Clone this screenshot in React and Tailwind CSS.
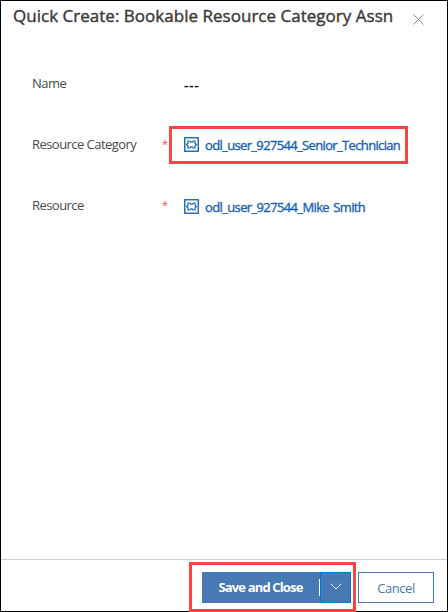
import React from "react";

function PuzzleIcon({ className }) {
  return (
    <svg width="15" height="15" viewBox="0 0 15 15" fill="none" stroke="#1d66b8" className={`shrink-0 ${className}`}>
      <rect x="0.75" y="0.75" width="13.5" height="13.5" strokeWidth="1.4" />
      <path
        d="M4 4H5.800L6.600 5.200H8.400L9.200 4H11V6.200L12.500 7.500L11 8.800V11H9.200L8.400 9.800H6.600L5.800 11H4V8.800L2.500 7.500L4 6.200Z"
        strokeWidth="1.2"
      />
    </svg>
  );
}

function Field({ label, required, children }) {
  return (
    <div className="flex h-[38px] items-center">
      <div className="-mt-[3px] w-[130px] shrink-0 whitespace-nowrap text-[13px] leading-[18px] tracking-[-0.55px] text-[#4c4a49]">
        {label}
      </div>
      <div className="-mt-[3px] w-[7px] shrink-0 text-[11px] leading-[18px] text-[#f0504f]">{required ? "*" : ""}</div>
      {children}
    </div>
  );
}

function Lookup({ text, highlighted }) {
  return (
    <div
      className={`flex h-[38px] w-[239px] items-center gap-[6px] border-[3px] pl-[12px] ${
        highlighted ? "border-[#fb4245]" : "border-transparent"
      }`}
    >
      <PuzzleIcon className={highlighted ? "-mt-[2px]" : ""} />
      <span
        className={`whitespace-nowrap text-[13px] leading-[18px] text-[#1862b4] [-webkit-text-stroke:0.35px_#1862b4] ${
          highlighted ? "tracking-[-0.65px]" : "mt-[2px] tracking-[-0.63px] [word-spacing:1.5px]"
        }`}
      >
        {text}
      </span>
    </div>
  );
}

export default function App() {
  return (
    <div className="flex h-[612px] w-[448px] flex-col border border-black bg-white font-['Open_Sans','Noto_Sans',sans-serif]">
      <header className="flex h-[64px] shrink-0 items-start justify-between pl-[12px] pr-[23px] pt-[3px]">
        <h1 className="whitespace-nowrap text-[17px] leading-[24px] tracking-[0.02px] text-[#3b3a39] [-webkit-text-stroke:0.4px_#3b3a39]">
          Quick Create: Bookable Resource Category Assn
        </h1>
        <button aria-label="Close" className="mt-[10px] shrink-0">
          <svg width="11" height="11" viewBox="0 0 11 11" stroke="#8a8886" strokeWidth="1" fill="none">
            <path d="M.5.5l10 10M10.500.5l-10 10" />
          </svg>
        </button>
      </header>

      <main className="flex flex-1 flex-col gap-[23px] pl-[31px]">
        <Field label="Name">
          <span className="ml-[15px] mt-[2px] text-[14px] font-semibold leading-[18px] tracking-[0.6px] text-black">---</span>
        </Field>
        <Field label="Resource Category" required>
          <Lookup text="odl_user_927544_Senior_Technician" highlighted />
        </Field>
        <Field label="Resource" required>
          <Lookup text="odl_user_927544_Mike Smith" />
        </Field>
      </main>

      <footer className="-mb-px flex h-[53px] shrink-0 items-start gap-[2px] border-t border-[#d2d0ce] pl-[188px] pt-[2px]">
        <div className="flex h-[50px] w-[167px] shrink-0 items-start border-[3px] border-[#fb4245] pl-[10px] pt-[7px]">
          <button className="h-[31px] w-[117px] whitespace-nowrap bg-[#4779b5] text-[13px] font-bold leading-[31px] tracking-[-0.85px] text-white">
            Save and Close
          </button>
          <span className="flex h-[31px] w-px items-center bg-[#4779b5]">
            <span className="h-[17px] w-px bg-white" />
          </span>
          <button aria-label="More save options" className="flex h-[31px] w-[31px] items-center justify-center border border-[#0078d4] bg-[#4779b5]">
            <svg width="12" height="7" viewBox="0 0 12 7" fill="none" stroke="white" strokeWidth="1" className="-mt-[2px]">
              <path d="M.7.7L6 6 11.300.7" />
            </svg>
          </button>
        </div>
        <button className="mt-[10px] h-[31px] w-[76px] border border-[#4779b5] text-[13px] leading-[31px] tracking-[-0.45px] text-[#4779b5]">
          Cancel
        </button>
      </footer>
    </div>
  );
}
